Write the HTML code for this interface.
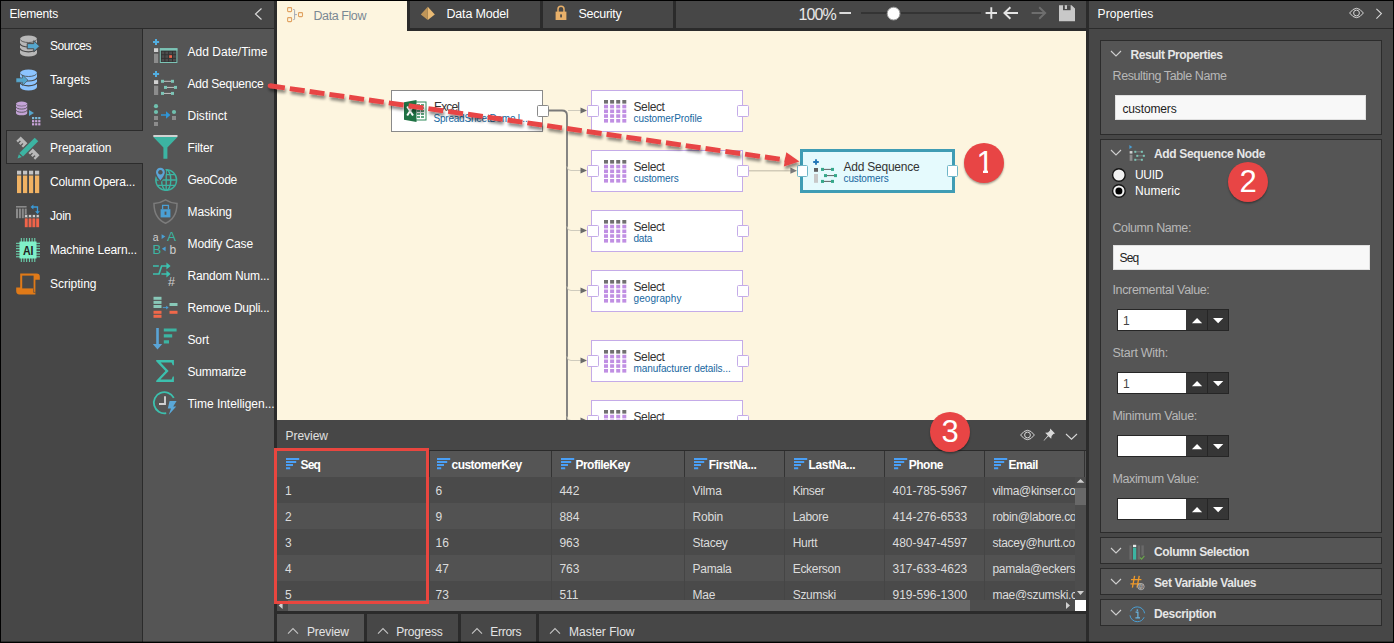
<!DOCTYPE html>
<html><head><meta charset="utf-8"><title>Data Flow</title>
<style>
html,body{margin:0;padding:0}
body{width:1394px;height:643px;position:relative;overflow:hidden;background:#2b2b2b;font-family:"Liberation Sans",sans-serif;font-size:12px;color:#fff}
body div,body span.t,body svg{position:absolute}
.t{white-space:nowrap;display:block}
</style></head><body>
<div style="left:1px;top:1px;width:273px;height:27px;background:#474747;"></div>
<div style="left:1px;top:29px;width:141px;height:613px;background:#474747;"></div>
<div style="left:143px;top:29px;width:131px;height:613px;background:#555555;"></div>
<div style="left:6px;top:130px;width:137px;height:34px;background:#555555;border:1px solid #2c2c2c;border-right:none;border-bottom-width:1.5px;box-sizing:border-box;"></div>
<span class="t " id="t1" style="left:9.5px;top:6px;font-size:12px;line-height:16px;letter-spacing:-0.19px;">Elements</span>
<svg style="left:252px;top:7px" width="12" height="14" viewBox="0 0 12 14"><path d="M9.5 1.5 L3.5 7 L9.5 12.5" fill="none" stroke="#d8d8d8" stroke-width="1.2"/></svg>
<span class="t " id="t2" style="left:50px;top:38px;font-size:12px;line-height:16px;letter-spacing:-0.43px;">Sources</span>
<span class="t " id="t3" style="left:50px;top:72px;font-size:12px;line-height:16px;letter-spacing:0.09px;">Targets</span>
<span class="t " id="t4" style="left:50px;top:106px;font-size:12px;line-height:16px;letter-spacing:-0.23px;">Select</span>
<span class="t " id="t5" style="left:50px;top:140px;font-size:12px;line-height:16px;letter-spacing:-0.05px;">Preparation</span>
<span class="t " id="t6" style="left:50px;top:174px;font-size:12px;line-height:16px;letter-spacing:-0.2px;">Column Opera...</span>
<span class="t " id="t7" style="left:50px;top:208px;font-size:12px;line-height:16px;letter-spacing:-0.25px;">Join</span>
<span class="t " id="t8" style="left:50px;top:242px;font-size:12px;line-height:16px;letter-spacing:-0.15px;">Machine Learn...</span>
<span class="t " id="t9" style="left:50px;top:276px;font-size:12px;line-height:16px;letter-spacing:-0.02px;">Scripting</span>
<span class="t " id="t10" style="left:187.5px;top:43.5px;font-size:12px;line-height:16px;letter-spacing:0.03px;">Add Date/Time</span>
<span class="t " id="t11" style="left:187.5px;top:75.5px;font-size:12px;line-height:16px;letter-spacing:-0.23px;">Add Sequence</span>
<span class="t " id="t12" style="left:187.5px;top:107.5px;font-size:12px;line-height:16px;letter-spacing:0.02px;">Distinct</span>
<span class="t " id="t13" style="left:187.5px;top:139.5px;font-size:12px;line-height:16px;letter-spacing:-0.11px;">Filter</span>
<span class="t " id="t14" style="left:187.5px;top:171.5px;font-size:12px;line-height:16px;letter-spacing:-0.27px;">GeoCode</span>
<span class="t " id="t15" style="left:187.5px;top:203.5px;font-size:12px;line-height:16px;letter-spacing:-0.03px;">Masking</span>
<span class="t " id="t16" style="left:187.5px;top:235.5px;font-size:12px;line-height:16px;letter-spacing:-0.11px;">Modify Case</span>
<span class="t " id="t17" style="left:187.5px;top:267.5px;font-size:12px;line-height:16px;letter-spacing:-0.16px;">Random Num...</span>
<span class="t " id="t18" style="left:187.5px;top:299.5px;font-size:12px;line-height:16px;letter-spacing:-0.23px;">Remove Dupli...</span>
<span class="t " id="t19" style="left:187.5px;top:331.5px;font-size:12px;line-height:16px;letter-spacing:-0.13px;">Sort</span>
<span class="t " id="t20" style="left:187.5px;top:363.5px;font-size:12px;line-height:16px;letter-spacing:-0.24px;">Summarize</span>
<span class="t " id="t21" style="left:187.5px;top:395.5px;font-size:12px;line-height:16px;letter-spacing:-0.03px;">Time Intelligen...</span>
<div style="left:277px;top:1px;width:130px;height:30px;background:#fdf5df;"></div>
<div style="left:410px;top:1px;width:130px;height:27px;background:#474747;"></div>
<div style="left:543px;top:1px;width:130px;height:27px;background:#474747;"></div>
<div style="left:676px;top:1px;width:410px;height:27px;background:#474747;"></div>
<span class="t " id="t22" style="left:313.5px;top:8.25px;font-size:12.5px;line-height:16.5px;color:#7a8894;letter-spacing:-0.42px;">Data Flow</span>
<span class="t " id="t23" style="left:446.5px;top:6.25px;font-size:12.5px;line-height:16.5px;letter-spacing:-0.19px;">Data Model</span>
<span class="t " id="t24" style="left:578.5px;top:6.25px;font-size:12.5px;line-height:16.5px;letter-spacing:-0.27px;">Security</span>
<span class="t " id="t25" style="left:798.5px;top:5.3px;font-size:16px;line-height:20px;color:#e8e8e8;letter-spacing:-0.86px;">100%</span>
<div style="left:277px;top:31px;width:809px;height:389px;background:#fdf5df;"></div>
<div style="left:277px;top:30px;width:809px;height:390px;overflow:hidden">
<svg style="left:0;top:0" width="810" height="390" viewBox="277 30 810 390"><path d="M548 110.5 H562 Q567 110.5 567 115.5 V430" fill="none" stroke="#7a7a7a" stroke-width="1.8"/><path d="M567 166.5 q0 4 4 4 H582" fill="none" stroke="#cfcbbd" stroke-width="1"/><path d="M580.5 167.5 l6.5 3 l-6.5 3z" fill="#6a6a6a"/><path d="M567 226.5 q0 4 4 4 H582" fill="none" stroke="#cfcbbd" stroke-width="1"/><path d="M580.5 227.5 l6.5 3 l-6.5 3z" fill="#6a6a6a"/><path d="M567 286.5 q0 4 4 4 H582" fill="none" stroke="#cfcbbd" stroke-width="1"/><path d="M580.5 287.5 l6.5 3 l-6.5 3z" fill="#6a6a6a"/><path d="M567 356.5 q0 4 4 4 H582" fill="none" stroke="#cfcbbd" stroke-width="1"/><path d="M580.5 357.5 l6.5 3 l-6.5 3z" fill="#6a6a6a"/><path d="M567 416.5 q0 4 4 4 H582" fill="none" stroke="#cfcbbd" stroke-width="1"/><path d="M580.5 417.5 l6.5 3 l-6.5 3z" fill="#6a6a6a"/><path d="M568 110.5 H582" stroke="#cfcbbd" stroke-width="1"/><path d="M580.5 107.5 l6.5 3 l-6.5 3z" fill="#6a6a6a"/><path d="M748 170.7 H792" stroke="#d2cbb8" stroke-width="1.6"/><path d="M790.4 167.6 l6.6 3.1 l-6.6 3.1z" fill="#7a7a7a"/></svg>
<div style="left:114px;top:60px;width:152px;height:41.5px;background:#ffffff;border:1px solid #8a8a8a;box-sizing:border-box;"></div>
<svg style="left:127px;top:70px" width="23" height="22" viewBox="0 0 23 22"><rect x="11" y="2" width="11" height="18" fill="#fff" stroke="#2e8a5a" stroke-width="1"/><path d="M13 5h7M13 8h7M13 11h7M13 14h7M13 17h7" stroke="#2e8a5a" stroke-width="1.6"/><path d="M16.5 4v14" stroke="#fff" stroke-width="1"/><path d="M0 2.2 L12.5 0 V22 L0 19.8z" fill="#1f7244"/><path d="M3.2 6.5 L9 15.5 M9 6.5 L3.2 15.5" stroke="#fff" stroke-width="2"/></svg>
<span class="t " id="t26" style="left:157px;top:69.2px;font-size:12px;line-height:16px;color:#333;letter-spacing:-0.87px;">Excel</span>
<span class="t " id="t27" style="left:156.5px;top:82.2px;font-size:10px;line-height:14px;color:#17679f;letter-spacing:-0.22px;">SpreadSheetDemo.l...</span>
<div style="left:260px;top:75px;width:11.5px;height:11.5px;background:#ffffff;border:1px solid #8a8a8a;box-sizing:border-box;border-radius:1.5px;"></div>
<div style="left:314px;top:60px;width:152px;height:41.5px;background:#ffffff;border:1px solid #c4abe8;box-sizing:border-box;"></div>
<svg style="left:327px;top:70.2px" width="23" height="23" viewBox="0 0 23 23"><rect x="0" y="0" width="4" height="3.6" fill="#707070"/><rect x="6.1" y="0" width="4" height="3.6" fill="#707070"/><rect x="12.2" y="0" width="4" height="3.6" fill="#707070"/><rect x="18.3" y="0" width="4" height="3.6" fill="#707070"/><rect x="0" y="4.75" width="4" height="3.6" fill="#c08fe3"/><rect x="6.1" y="4.75" width="4" height="3.6" fill="#c08fe3"/><rect x="12.2" y="4.75" width="4" height="3.6" fill="#c08fe3"/><rect x="18.3" y="4.75" width="4" height="3.6" fill="#c08fe3"/><rect x="0" y="9.5" width="4" height="3.6" fill="#c08fe3"/><rect x="6.1" y="9.5" width="4" height="3.6" fill="#c08fe3"/><rect x="12.2" y="9.5" width="4" height="3.6" fill="#c08fe3"/><rect x="18.3" y="9.5" width="4" height="3.6" fill="#c08fe3"/><rect x="0" y="14.25" width="4" height="3.6" fill="#c08fe3"/><rect x="6.1" y="14.25" width="4" height="3.6" fill="#c08fe3"/><rect x="12.2" y="14.25" width="4" height="3.6" fill="#c08fe3"/><rect x="18.3" y="14.25" width="4" height="3.6" fill="#c08fe3"/><rect x="0" y="19" width="4" height="3.6" fill="#c08fe3"/><rect x="6.1" y="19" width="4" height="3.6" fill="#c08fe3"/><rect x="12.2" y="19" width="4" height="3.6" fill="#c08fe3"/><rect x="18.3" y="19" width="4" height="3.6" fill="#c08fe3"/></svg>
<span class="t " id="t28" style="left:356.5px;top:69.2px;font-size:12px;line-height:16px;color:#333;letter-spacing:-0.39px;">Select</span>
<span class="t " id="t29" style="left:356.5px;top:82.2px;font-size:10px;line-height:14px;color:#17679f;letter-spacing:-0.06px;">customerProfile</span>
<div style="left:310px;top:75px;width:11.5px;height:11.5px;background:#ffffff;border:1px solid #c4abe8;box-sizing:border-box;border-radius:1.5px;"></div>
<div style="left:460px;top:75px;width:11.5px;height:11.5px;background:#ffffff;border:1px solid #c4abe8;box-sizing:border-box;border-radius:1.5px;"></div>
<div style="left:314px;top:120px;width:152px;height:41.5px;background:#ffffff;border:1px solid #c4abe8;box-sizing:border-box;"></div>
<svg style="left:327px;top:130.2px" width="23" height="23" viewBox="0 0 23 23"><rect x="0" y="0" width="4" height="3.6" fill="#707070"/><rect x="6.1" y="0" width="4" height="3.6" fill="#707070"/><rect x="12.2" y="0" width="4" height="3.6" fill="#707070"/><rect x="18.3" y="0" width="4" height="3.6" fill="#707070"/><rect x="0" y="4.75" width="4" height="3.6" fill="#c08fe3"/><rect x="6.1" y="4.75" width="4" height="3.6" fill="#c08fe3"/><rect x="12.2" y="4.75" width="4" height="3.6" fill="#c08fe3"/><rect x="18.3" y="4.75" width="4" height="3.6" fill="#c08fe3"/><rect x="0" y="9.5" width="4" height="3.6" fill="#c08fe3"/><rect x="6.1" y="9.5" width="4" height="3.6" fill="#c08fe3"/><rect x="12.2" y="9.5" width="4" height="3.6" fill="#c08fe3"/><rect x="18.3" y="9.5" width="4" height="3.6" fill="#c08fe3"/><rect x="0" y="14.25" width="4" height="3.6" fill="#c08fe3"/><rect x="6.1" y="14.25" width="4" height="3.6" fill="#c08fe3"/><rect x="12.2" y="14.25" width="4" height="3.6" fill="#c08fe3"/><rect x="18.3" y="14.25" width="4" height="3.6" fill="#c08fe3"/><rect x="0" y="19" width="4" height="3.6" fill="#c08fe3"/><rect x="6.1" y="19" width="4" height="3.6" fill="#c08fe3"/><rect x="12.2" y="19" width="4" height="3.6" fill="#c08fe3"/><rect x="18.3" y="19" width="4" height="3.6" fill="#c08fe3"/></svg>
<span class="t " id="t30" style="left:356.5px;top:129.2px;font-size:12px;line-height:16px;color:#333;letter-spacing:-0.39px;">Select</span>
<span class="t " id="t31" style="left:356.5px;top:142.2px;font-size:10px;line-height:14px;color:#17679f;letter-spacing:-0.12px;">customers</span>
<div style="left:310px;top:135px;width:11.5px;height:11.5px;background:#ffffff;border:1px solid #c4abe8;box-sizing:border-box;border-radius:1.5px;"></div>
<div style="left:460px;top:135px;width:11.5px;height:11.5px;background:#ffffff;border:1px solid #c4abe8;box-sizing:border-box;border-radius:1.5px;"></div>
<div style="left:314px;top:180px;width:152px;height:41.5px;background:#ffffff;border:1px solid #c4abe8;box-sizing:border-box;"></div>
<svg style="left:327px;top:190.2px" width="23" height="23" viewBox="0 0 23 23"><rect x="0" y="0" width="4" height="3.6" fill="#707070"/><rect x="6.1" y="0" width="4" height="3.6" fill="#707070"/><rect x="12.2" y="0" width="4" height="3.6" fill="#707070"/><rect x="18.3" y="0" width="4" height="3.6" fill="#707070"/><rect x="0" y="4.75" width="4" height="3.6" fill="#c08fe3"/><rect x="6.1" y="4.75" width="4" height="3.6" fill="#c08fe3"/><rect x="12.2" y="4.75" width="4" height="3.6" fill="#c08fe3"/><rect x="18.3" y="4.75" width="4" height="3.6" fill="#c08fe3"/><rect x="0" y="9.5" width="4" height="3.6" fill="#c08fe3"/><rect x="6.1" y="9.5" width="4" height="3.6" fill="#c08fe3"/><rect x="12.2" y="9.5" width="4" height="3.6" fill="#c08fe3"/><rect x="18.3" y="9.5" width="4" height="3.6" fill="#c08fe3"/><rect x="0" y="14.25" width="4" height="3.6" fill="#c08fe3"/><rect x="6.1" y="14.25" width="4" height="3.6" fill="#c08fe3"/><rect x="12.2" y="14.25" width="4" height="3.6" fill="#c08fe3"/><rect x="18.3" y="14.25" width="4" height="3.6" fill="#c08fe3"/><rect x="0" y="19" width="4" height="3.6" fill="#c08fe3"/><rect x="6.1" y="19" width="4" height="3.6" fill="#c08fe3"/><rect x="12.2" y="19" width="4" height="3.6" fill="#c08fe3"/><rect x="18.3" y="19" width="4" height="3.6" fill="#c08fe3"/></svg>
<span class="t " id="t32" style="left:356.5px;top:189.2px;font-size:12px;line-height:16px;color:#333;letter-spacing:-0.39px;">Select</span>
<span class="t " id="t33" style="left:356.5px;top:202.2px;font-size:10px;line-height:14px;color:#17679f;letter-spacing:-0.24px;">data</span>
<div style="left:310px;top:195px;width:11.5px;height:11.5px;background:#ffffff;border:1px solid #c4abe8;box-sizing:border-box;border-radius:1.5px;"></div>
<div style="left:460px;top:195px;width:11.5px;height:11.5px;background:#ffffff;border:1px solid #c4abe8;box-sizing:border-box;border-radius:1.5px;"></div>
<div style="left:314px;top:240px;width:152px;height:41.5px;background:#ffffff;border:1px solid #c4abe8;box-sizing:border-box;"></div>
<svg style="left:327px;top:250.2px" width="23" height="23" viewBox="0 0 23 23"><rect x="0" y="0" width="4" height="3.6" fill="#707070"/><rect x="6.1" y="0" width="4" height="3.6" fill="#707070"/><rect x="12.2" y="0" width="4" height="3.6" fill="#707070"/><rect x="18.3" y="0" width="4" height="3.6" fill="#707070"/><rect x="0" y="4.75" width="4" height="3.6" fill="#c08fe3"/><rect x="6.1" y="4.75" width="4" height="3.6" fill="#c08fe3"/><rect x="12.2" y="4.75" width="4" height="3.6" fill="#c08fe3"/><rect x="18.3" y="4.75" width="4" height="3.6" fill="#c08fe3"/><rect x="0" y="9.5" width="4" height="3.6" fill="#c08fe3"/><rect x="6.1" y="9.5" width="4" height="3.6" fill="#c08fe3"/><rect x="12.2" y="9.5" width="4" height="3.6" fill="#c08fe3"/><rect x="18.3" y="9.5" width="4" height="3.6" fill="#c08fe3"/><rect x="0" y="14.25" width="4" height="3.6" fill="#c08fe3"/><rect x="6.1" y="14.25" width="4" height="3.6" fill="#c08fe3"/><rect x="12.2" y="14.25" width="4" height="3.6" fill="#c08fe3"/><rect x="18.3" y="14.25" width="4" height="3.6" fill="#c08fe3"/><rect x="0" y="19" width="4" height="3.6" fill="#c08fe3"/><rect x="6.1" y="19" width="4" height="3.6" fill="#c08fe3"/><rect x="12.2" y="19" width="4" height="3.6" fill="#c08fe3"/><rect x="18.3" y="19" width="4" height="3.6" fill="#c08fe3"/></svg>
<span class="t " id="t34" style="left:356.5px;top:249.2px;font-size:12px;line-height:16px;color:#333;letter-spacing:-0.39px;">Select</span>
<span class="t " id="t35" style="left:356.5px;top:262.2px;font-size:10px;line-height:14px;color:#17679f;letter-spacing:0.08px;">geography</span>
<div style="left:310px;top:255px;width:11.5px;height:11.5px;background:#ffffff;border:1px solid #c4abe8;box-sizing:border-box;border-radius:1.5px;"></div>
<div style="left:460px;top:255px;width:11.5px;height:11.5px;background:#ffffff;border:1px solid #c4abe8;box-sizing:border-box;border-radius:1.5px;"></div>
<div style="left:314px;top:310px;width:152px;height:41.5px;background:#ffffff;border:1px solid #c4abe8;box-sizing:border-box;"></div>
<svg style="left:327px;top:320.2px" width="23" height="23" viewBox="0 0 23 23"><rect x="0" y="0" width="4" height="3.6" fill="#707070"/><rect x="6.1" y="0" width="4" height="3.6" fill="#707070"/><rect x="12.2" y="0" width="4" height="3.6" fill="#707070"/><rect x="18.3" y="0" width="4" height="3.6" fill="#707070"/><rect x="0" y="4.75" width="4" height="3.6" fill="#c08fe3"/><rect x="6.1" y="4.75" width="4" height="3.6" fill="#c08fe3"/><rect x="12.2" y="4.75" width="4" height="3.6" fill="#c08fe3"/><rect x="18.3" y="4.75" width="4" height="3.6" fill="#c08fe3"/><rect x="0" y="9.5" width="4" height="3.6" fill="#c08fe3"/><rect x="6.1" y="9.5" width="4" height="3.6" fill="#c08fe3"/><rect x="12.2" y="9.5" width="4" height="3.6" fill="#c08fe3"/><rect x="18.3" y="9.5" width="4" height="3.6" fill="#c08fe3"/><rect x="0" y="14.25" width="4" height="3.6" fill="#c08fe3"/><rect x="6.1" y="14.25" width="4" height="3.6" fill="#c08fe3"/><rect x="12.2" y="14.25" width="4" height="3.6" fill="#c08fe3"/><rect x="18.3" y="14.25" width="4" height="3.6" fill="#c08fe3"/><rect x="0" y="19" width="4" height="3.6" fill="#c08fe3"/><rect x="6.1" y="19" width="4" height="3.6" fill="#c08fe3"/><rect x="12.2" y="19" width="4" height="3.6" fill="#c08fe3"/><rect x="18.3" y="19" width="4" height="3.6" fill="#c08fe3"/></svg>
<span class="t " id="t36" style="left:356.5px;top:319.2px;font-size:12px;line-height:16px;color:#333;letter-spacing:-0.39px;">Select</span>
<span class="t " id="t37" style="left:356.5px;top:332.2px;font-size:10px;line-height:14px;color:#17679f;letter-spacing:-0.08px;">manufacturer details...</span>
<div style="left:310px;top:325px;width:11.5px;height:11.5px;background:#ffffff;border:1px solid #c4abe8;box-sizing:border-box;border-radius:1.5px;"></div>
<div style="left:460px;top:325px;width:11.5px;height:11.5px;background:#ffffff;border:1px solid #c4abe8;box-sizing:border-box;border-radius:1.5px;"></div>
<div style="left:314px;top:370px;width:152px;height:41.5px;background:#ffffff;border:1px solid #c4abe8;box-sizing:border-box;"></div>
<svg style="left:327px;top:380.2px" width="23" height="23" viewBox="0 0 23 23"><rect x="0" y="0" width="4" height="3.6" fill="#707070"/><rect x="6.1" y="0" width="4" height="3.6" fill="#707070"/><rect x="12.2" y="0" width="4" height="3.6" fill="#707070"/><rect x="18.3" y="0" width="4" height="3.6" fill="#707070"/><rect x="0" y="4.75" width="4" height="3.6" fill="#c08fe3"/><rect x="6.1" y="4.75" width="4" height="3.6" fill="#c08fe3"/><rect x="12.2" y="4.75" width="4" height="3.6" fill="#c08fe3"/><rect x="18.3" y="4.75" width="4" height="3.6" fill="#c08fe3"/><rect x="0" y="9.5" width="4" height="3.6" fill="#c08fe3"/><rect x="6.1" y="9.5" width="4" height="3.6" fill="#c08fe3"/><rect x="12.2" y="9.5" width="4" height="3.6" fill="#c08fe3"/><rect x="18.3" y="9.5" width="4" height="3.6" fill="#c08fe3"/><rect x="0" y="14.25" width="4" height="3.6" fill="#c08fe3"/><rect x="6.1" y="14.25" width="4" height="3.6" fill="#c08fe3"/><rect x="12.2" y="14.25" width="4" height="3.6" fill="#c08fe3"/><rect x="18.3" y="14.25" width="4" height="3.6" fill="#c08fe3"/><rect x="0" y="19" width="4" height="3.6" fill="#c08fe3"/><rect x="6.1" y="19" width="4" height="3.6" fill="#c08fe3"/><rect x="12.2" y="19" width="4" height="3.6" fill="#c08fe3"/><rect x="18.3" y="19" width="4" height="3.6" fill="#c08fe3"/></svg>
<span class="t " id="t38" style="left:356.5px;top:379.2px;font-size:12px;line-height:16px;color:#333;letter-spacing:-0.39px;">Select</span>
<span class="t " id="t39" style="left:356.5px;top:392.2px;font-size:10px;line-height:14px;color:#17679f;letter-spacing:0.21px;">products</span>
<div style="left:310px;top:385px;width:11.5px;height:11.5px;background:#ffffff;border:1px solid #c4abe8;box-sizing:border-box;border-radius:1.5px;"></div>
<div style="left:460px;top:385px;width:11.5px;height:11.5px;background:#ffffff;border:1px solid #c4abe8;box-sizing:border-box;border-radius:1.5px;"></div>
<div style="left:523px;top:119px;width:154.5px;height:44px;background:#e5fafd;border:3px solid #3f9cb4;box-sizing:border-box;"></div>
<svg style="left:536px;top:129px" width="25" height="25" viewBox="0 0 25 25"><path d="M3 0.2v5.6M0.2 3h5.6" stroke="#2478b8" stroke-width="1.9"/><rect x="1" y="9" width="4" height="3.8" fill="#606060"/><rect x="1" y="15" width="4" height="8.8" fill="#c8c8c8"/><path d="M9 10.4h11M12 16.6h11M9 22.4h11" stroke="#505050" stroke-width="0.9"/><rect x="8" y="8.9" width="3" height="3" fill="#35a88a"/><rect x="18" y="8.9" width="3" height="3" fill="#35a88a"/><rect x="11" y="15.1" width="3" height="3" fill="#35a88a"/><rect x="21" y="15.1" width="3" height="3" fill="#35a88a"/><rect x="8" y="20.9" width="3" height="3" fill="#35a88a"/><rect x="18" y="20.9" width="3" height="3" fill="#35a88a"/></svg>
<span class="t " id="t40" style="left:566.5px;top:128.9px;font-size:12px;line-height:16px;color:#333;letter-spacing:-0.23px;">Add Sequence</span>
<span class="t " id="t41" style="left:566.5px;top:142px;font-size:10px;line-height:14px;color:#17679f;letter-spacing:-0.12px;">customers</span>
<div style="left:519.6px;top:135px;width:11.5px;height:11.5px;background:#ffffff;border:1px solid #6fb6c8;box-sizing:border-box;border-radius:1.5px;"></div>
<div style="left:669.8px;top:135px;width:11.5px;height:11.5px;background:#ffffff;border:1px solid #6fb6c8;box-sizing:border-box;border-radius:1.5px;"></div>
</div>
<div style="left:277px;top:420px;width:809px;height:30px;background:#474747;"></div>
<span class="t " id="t42" style="left:285.5px;top:427.5px;font-size:12px;line-height:16px;color:#e0e0e0;letter-spacing:-0.03px;">Preview</span>
<div style="left:277px;top:451px;width:809px;height:26px;background:#555555;"></div>
<div style="left:277px;top:477px;width:798px;height:26px;background:#4a4a4a;"></div>
<div style="left:277px;top:503px;width:798px;height:26px;background:#525252;"></div>
<div style="left:277px;top:529px;width:798px;height:26px;background:#4a4a4a;"></div>
<div style="left:277px;top:555px;width:798px;height:26px;background:#525252;"></div>
<div style="left:277px;top:581px;width:798px;height:19px;background:#4a4a4a;"></div>
<div style="left:429px;top:451px;width:1px;height:26px;background:#333333;"></div>
<div style="left:429px;top:477px;width:1px;height:123px;background:#454545;"></div>
<div style="left:551px;top:451px;width:1px;height:26px;background:#333333;"></div>
<div style="left:551px;top:477px;width:1px;height:123px;background:#454545;"></div>
<div style="left:684px;top:451px;width:1px;height:26px;background:#333333;"></div>
<div style="left:684px;top:477px;width:1px;height:123px;background:#454545;"></div>
<div style="left:784px;top:451px;width:1px;height:26px;background:#333333;"></div>
<div style="left:784px;top:477px;width:1px;height:123px;background:#454545;"></div>
<div style="left:884px;top:451px;width:1px;height:26px;background:#333333;"></div>
<div style="left:884px;top:477px;width:1px;height:123px;background:#454545;"></div>
<div style="left:984px;top:451px;width:1px;height:26px;background:#333333;"></div>
<div style="left:984px;top:477px;width:1px;height:123px;background:#454545;"></div>
<div style="left:1084px;top:451px;width:1px;height:26px;background:#333333;"></div>
<div style="left:277px;top:450px;width:798px;height:150px;overflow:hidden">
<svg style="left:8.8px;top:8px" width="14" height="12" viewBox="0 0 14 12"><path d="M0 0h13.2v2H0zM0 3.05h10.2v2H0zM0 6.1h7v2H0zM0 9.2h4.2v2H0z" fill="#4a9ff5"/></svg>
<span class="t " id="t43" style="left:23.4px;top:6.5px;font-size:12px;line-height:16px;font-weight:bold;letter-spacing:-0.74px;">Seq</span>
<svg style="left:159.9px;top:8px" width="14" height="12" viewBox="0 0 14 12"><path d="M0 0h13.2v2H0zM0 3.05h10.2v2H0zM0 6.1h7v2H0zM0 9.2h4.2v2H0z" fill="#4a9ff5"/></svg>
<span class="t " id="t44" style="left:174.6px;top:6.5px;font-size:12px;line-height:16px;font-weight:bold;letter-spacing:-0.55px;">customerKey</span>
<svg style="left:283.5px;top:8px" width="14" height="12" viewBox="0 0 14 12"><path d="M0 0h13.2v2H0zM0 3.05h10.2v2H0zM0 6.1h7v2H0zM0 9.2h4.2v2H0z" fill="#4a9ff5"/></svg>
<span class="t " id="t45" style="left:298.4px;top:6.5px;font-size:12px;line-height:16px;font-weight:bold;letter-spacing:-0.5px;">ProfileKey</span>
<svg style="left:416.9px;top:8px" width="14" height="12" viewBox="0 0 14 12"><path d="M0 0h13.2v2H0zM0 3.05h10.2v2H0zM0 6.1h7v2H0zM0 9.2h4.2v2H0z" fill="#4a9ff5"/></svg>
<span class="t " id="t46" style="left:431.7px;top:6.5px;font-size:12px;line-height:16px;font-weight:bold;letter-spacing:-0.36px;">FirstNa...</span>
<svg style="left:517px;top:8px" width="14" height="12" viewBox="0 0 14 12"><path d="M0 0h13.2v2H0zM0 3.05h10.2v2H0zM0 6.1h7v2H0zM0 9.2h4.2v2H0z" fill="#4a9ff5"/></svg>
<span class="t " id="t47" style="left:531.6px;top:6.5px;font-size:12px;line-height:16px;font-weight:bold;letter-spacing:-0.38px;">LastNa...</span>
<svg style="left:617px;top:8px" width="14" height="12" viewBox="0 0 14 12"><path d="M0 0h13.2v2H0zM0 3.05h10.2v2H0zM0 6.1h7v2H0zM0 9.2h4.2v2H0z" fill="#4a9ff5"/></svg>
<span class="t " id="t48" style="left:631.8px;top:6.5px;font-size:12px;line-height:16px;font-weight:bold;letter-spacing:-0.51px;">Phone</span>
<svg style="left:717px;top:8px" width="14" height="12" viewBox="0 0 14 12"><path d="M0 0h13.2v2H0zM0 3.05h10.2v2H0zM0 6.1h7v2H0zM0 9.2h4.2v2H0z" fill="#4a9ff5"/></svg>
<span class="t " id="t49" style="left:731.6px;top:6.5px;font-size:12px;line-height:16px;font-weight:bold;letter-spacing:-0.58px;">Email</span>
<span class="t " id="t50" style="left:8px;top:32.6px;font-size:12px;line-height:16px;color:#dcdcdc;">1</span>
<span class="t " id="t51" style="left:158.5px;top:32.6px;font-size:12px;line-height:16px;color:#dcdcdc;">6</span>
<span class="t " id="t52" style="left:282.4px;top:32.6px;font-size:12px;line-height:16px;color:#dcdcdc;">442</span>
<span class="t " id="t53" style="left:415.6px;top:32.6px;font-size:12px;line-height:16px;color:#dcdcdc;letter-spacing:-0.12px;">Vilma</span>
<span class="t " id="t54" style="left:515.7px;top:32.6px;font-size:12px;line-height:16px;color:#dcdcdc;letter-spacing:-0.39px;">Kinser</span>
<span class="t " id="t55" style="left:615.5px;top:32.6px;font-size:12px;line-height:16px;color:#dcdcdc;">401-785-5967</span>
<span class="t " id="t56" style="left:715.5px;top:32.6px;font-size:12px;line-height:16px;color:#dcdcdc;letter-spacing:-0.3px;">vilma@kinser.com</span>
<span class="t " id="t57" style="left:8px;top:58.6px;font-size:12px;line-height:16px;color:#dcdcdc;">2</span>
<span class="t " id="t58" style="left:158.5px;top:58.6px;font-size:12px;line-height:16px;color:#dcdcdc;">9</span>
<span class="t " id="t59" style="left:282.4px;top:58.6px;font-size:12px;line-height:16px;color:#dcdcdc;">884</span>
<span class="t " id="t60" style="left:415.6px;top:58.6px;font-size:12px;line-height:16px;color:#dcdcdc;letter-spacing:-0.21px;">Robin</span>
<span class="t " id="t61" style="left:515.7px;top:58.6px;font-size:12px;line-height:16px;color:#dcdcdc;letter-spacing:-0.28px;">Labore</span>
<span class="t " id="t62" style="left:615.5px;top:58.6px;font-size:12px;line-height:16px;color:#dcdcdc;">414-276-6533</span>
<span class="t " id="t63" style="left:715.5px;top:58.6px;font-size:12px;line-height:16px;color:#dcdcdc;letter-spacing:-0.3px;">robin@labore.com</span>
<span class="t " id="t64" style="left:8px;top:84.6px;font-size:12px;line-height:16px;color:#dcdcdc;">3</span>
<span class="t " id="t65" style="left:158.5px;top:84.6px;font-size:12px;line-height:16px;color:#dcdcdc;">16</span>
<span class="t " id="t66" style="left:282.4px;top:84.6px;font-size:12px;line-height:16px;color:#dcdcdc;">963</span>
<span class="t " id="t67" style="left:415.6px;top:84.6px;font-size:12px;line-height:16px;color:#dcdcdc;letter-spacing:-0.3px;">Stacey</span>
<span class="t " id="t68" style="left:515.7px;top:84.6px;font-size:12px;line-height:16px;color:#dcdcdc;letter-spacing:-0.3px;">Hurtt</span>
<span class="t " id="t69" style="left:615.5px;top:84.6px;font-size:12px;line-height:16px;color:#dcdcdc;">480-947-4597</span>
<span class="t " id="t70" style="left:715.5px;top:84.6px;font-size:12px;line-height:16px;color:#dcdcdc;letter-spacing:-0.3px;">stacey@hurtt.com</span>
<span class="t " id="t71" style="left:8px;top:110.6px;font-size:12px;line-height:16px;color:#dcdcdc;">4</span>
<span class="t " id="t72" style="left:158.5px;top:110.6px;font-size:12px;line-height:16px;color:#dcdcdc;">47</span>
<span class="t " id="t73" style="left:282.4px;top:110.6px;font-size:12px;line-height:16px;color:#dcdcdc;">763</span>
<span class="t " id="t74" style="left:415.6px;top:110.6px;font-size:12px;line-height:16px;color:#dcdcdc;letter-spacing:-0.3px;">Pamala</span>
<span class="t " id="t75" style="left:515.7px;top:110.6px;font-size:12px;line-height:16px;color:#dcdcdc;letter-spacing:-0.3px;">Eckerson</span>
<span class="t " id="t76" style="left:615.5px;top:110.6px;font-size:12px;line-height:16px;color:#dcdcdc;">317-633-4623</span>
<span class="t " id="t77" style="left:715.5px;top:110.6px;font-size:12px;line-height:16px;color:#dcdcdc;letter-spacing:-0.3px;">pamala@eckerson.com</span>
<span class="t " id="t78" style="left:8px;top:136.6px;font-size:12px;line-height:16px;color:#dcdcdc;">5</span>
<span class="t " id="t79" style="left:158.5px;top:136.6px;font-size:12px;line-height:16px;color:#dcdcdc;">73</span>
<span class="t " id="t80" style="left:282.4px;top:136.6px;font-size:12px;line-height:16px;color:#dcdcdc;">511</span>
<span class="t " id="t81" style="left:415.6px;top:136.6px;font-size:12px;line-height:16px;color:#dcdcdc;letter-spacing:-0.3px;">Mae</span>
<span class="t " id="t82" style="left:515.7px;top:136.6px;font-size:12px;line-height:16px;color:#dcdcdc;letter-spacing:-0.3px;">Szumski</span>
<span class="t " id="t83" style="left:615.5px;top:136.6px;font-size:12px;line-height:16px;color:#dcdcdc;">919-596-1300</span>
<span class="t " id="t84" style="left:715.5px;top:136.6px;font-size:12px;line-height:16px;color:#dcdcdc;letter-spacing:-0.3px;">mae@szumski.com</span>
</div>
<div style="left:1075px;top:477px;width:11px;height:123px;background:#4d4d4d;"></div>
<div style="left:1075px;top:488px;width:11px;height:17px;background:#686868;"></div>
<svg style="left:1075px;top:477px" width="11" height="123" viewBox="0 0 11 123"><path d="M1.7 5.8 L5.55 2 L9.4 5.8z M2 114 L9 114 L5.5 118z" fill="#d0d0d0"/></svg>
<div style="left:277px;top:600px;width:798px;height:11px;background:#4d4d4d;"></div>
<div style="left:288px;top:600px;width:682px;height:11px;background:#666666;"></div>
<svg style="left:277px;top:600px" width="798" height="11" viewBox="0 0 798 11"><path d="M5.6 2 L5.6 9 L1.6 5.5z M789 2 L789 9 L793 5.5z" fill="#d0d0d0"/></svg>
<div style="left:1075px;top:600px;width:11px;height:11px;background:#ffffff;"></div>
<div style="left:277px;top:614px;width:809px;height:28px;background:#474747;"></div>
<div style="left:277px;top:614px;width:87px;height:28px;background:#555555;"></div>
<div style="left:364px;top:614px;width:3px;height:28px;background:#2b2b2b;"></div>
<div style="left:458px;top:614px;width:3px;height:28px;background:#2b2b2b;"></div>
<div style="left:536px;top:614px;width:3px;height:28px;background:#2b2b2b;"></div>
<svg style="left:287px;top:627.4px" width="12" height="8" viewBox="0 0 12 8"><path d="M1 6.6 L6 1.6 L11 6.6" fill="none" stroke="#c4c4c4" stroke-width="1.1"/></svg>
<span class="t " id="t85" style="left:306.9px;top:623.6px;font-size:12px;line-height:16px;color:#e4e4e4;letter-spacing:-0.1px;">Preview</span>
<svg style="left:377px;top:627.4px" width="12" height="8" viewBox="0 0 12 8"><path d="M1 6.6 L6 1.6 L11 6.6" fill="none" stroke="#c4c4c4" stroke-width="1.1"/></svg>
<span class="t " id="t86" style="left:396.2px;top:623.6px;font-size:12px;line-height:16px;color:#e4e4e4;letter-spacing:-0.2px;">Progress</span>
<svg style="left:471px;top:627.4px" width="12" height="8" viewBox="0 0 12 8"><path d="M1 6.6 L6 1.6 L11 6.6" fill="none" stroke="#c4c4c4" stroke-width="1.1"/></svg>
<span class="t " id="t87" style="left:490.2px;top:623.6px;font-size:12px;line-height:16px;color:#e4e4e4;letter-spacing:-0.25px;">Errors</span>
<svg style="left:549px;top:627.4px" width="12" height="8" viewBox="0 0 12 8"><path d="M1 6.6 L6 1.6 L11 6.6" fill="none" stroke="#c4c4c4" stroke-width="1.1"/></svg>
<span class="t " id="t88" style="left:569.1px;top:623.6px;font-size:12px;line-height:16px;color:#e4e4e4;letter-spacing:0.01px;">Master Flow</span>
<div style="left:1089px;top:1px;width:305px;height:27px;background:#474747;"></div>
<div style="left:1089px;top:29px;width:305px;height:613px;background:#474747;"></div>
<span class="t " id="t89" style="left:1097.5px;top:6px;font-size:12px;line-height:16px;letter-spacing:0.13px;">Properties</span>
<div style="left:1100px;top:40px;width:282px;height:95px;background:#555555;border:1px solid #2c2c2c;box-sizing:border-box;"></div>
<div style="left:1100px;top:139px;width:282px;height:394px;background:#555555;border:1px solid #2c2c2c;box-sizing:border-box;"></div>
<div style="left:1100px;top:537px;width:282px;height:27px;background:#555555;border:1px solid #2c2c2c;box-sizing:border-box;"></div>
<div style="left:1100px;top:568.4px;width:282px;height:27px;background:#555555;border:1px solid #2c2c2c;box-sizing:border-box;"></div>
<div style="left:1100px;top:599.4px;width:282px;height:27px;background:#555555;border:1px solid #2c2c2c;box-sizing:border-box;"></div>
<svg style="left:1109.5px;top:50.2px" width="12" height="8" viewBox="0 0 12 8"><path d="M1 1 L6 6 L11 1" fill="none" stroke="#d0d0d0" stroke-width="1.1"/></svg>
<svg style="left:1109.5px;top:149.2px" width="12" height="8" viewBox="0 0 12 8"><path d="M1 1 L6 6 L11 1" fill="none" stroke="#d0d0d0" stroke-width="1.1"/></svg>
<svg style="left:1109.5px;top:547.2px" width="12" height="8" viewBox="0 0 12 8"><path d="M1 1 L6 6 L11 1" fill="none" stroke="#d0d0d0" stroke-width="1.1"/></svg>
<svg style="left:1109.5px;top:578.2px" width="12" height="8" viewBox="0 0 12 8"><path d="M1 1 L6 6 L11 1" fill="none" stroke="#d0d0d0" stroke-width="1.1"/></svg>
<svg style="left:1109.5px;top:609.2px" width="12" height="8" viewBox="0 0 12 8"><path d="M1 1 L6 6 L11 1" fill="none" stroke="#d0d0d0" stroke-width="1.1"/></svg>
<span class="t " id="t90" style="left:1130.5px;top:46.5px;font-size:12px;line-height:16px;color:#e6e6e6;font-weight:bold;letter-spacing:-0.43px;">Result Properties</span>
<span class="t " id="t91" style="left:1112.5px;top:67.75px;font-size:12.5px;line-height:16.5px;color:#b8b8b8;letter-spacing:-0.4px;">Resulting Table Name</span>
<div style="left:1115px;top:95px;width:251px;height:25px;background:#f8f8f8;border:1px solid #e0e0e0;box-sizing:border-box;"></div>
<span class="t " id="t92" style="left:1122.5px;top:100.5px;font-size:12px;line-height:16px;color:#222;letter-spacing:-0.15px;">customers</span>
<span class="t " id="t93" style="left:1154px;top:145.5px;font-size:12px;line-height:16px;color:#e6e6e6;font-weight:bold;letter-spacing:-0.33px;">Add Sequence Node</span>
<svg style="left:1111px;top:166.8px" width="16" height="16" viewBox="0 0 16 16"><circle cx="7.9" cy="8" r="6.3" fill="#f2f2f2" stroke="#151515" stroke-width="1.4"/></svg>
<svg style="left:1111px;top:182.8px" width="16" height="16" viewBox="0 0 16 16"><circle cx="7.9" cy="8" r="6.3" fill="#f2f2f2" stroke="#151515" stroke-width="1.4"/><circle cx="7.9" cy="8" r="3.5" fill="#000"/></svg>
<span class="t " id="t94" style="left:1135px;top:167px;font-size:12px;line-height:16px;letter-spacing:-0.34px;">UUID</span>
<span class="t " id="t95" style="left:1135px;top:183px;font-size:12px;line-height:16px;letter-spacing:0.05px;">Numeric</span>
<span class="t " id="t96" style="left:1112.5px;top:219.75px;font-size:12.5px;line-height:16.5px;color:#b8b8b8;letter-spacing:-0.41px;">Column Name:</span>
<div style="left:1112.5px;top:244.5px;width:257px;height:25px;background:#f8f8f8;border:1px solid #e0e0e0;box-sizing:border-box;"></div>
<span class="t " id="t97" style="left:1119.5px;top:250px;font-size:12px;line-height:16px;color:#222;letter-spacing:-0.79px;">Seq</span>
<span class="t " id="t98" style="left:1112.5px;top:281.75px;font-size:12.5px;line-height:16.5px;color:#b8b8b8;letter-spacing:-0.35px;">Incremental Value:</span>
<div style="left:1117px;top:309px;width:112px;height:22px;background:#363636;border:1px solid #262626;box-sizing:border-box;"></div>
<div style="left:1118px;top:310px;width:68px;height:20px;background:#ffffff;"></div>
<div style="left:1207px;top:310px;width:1px;height:20px;background:#262626;"></div>
<svg style="left:1186px;top:309px" width="43" height="22" viewBox="0 0 43 22"><path d="M5.9 14.3 L11.05 9.1 L16.2 14.3z M27 8.9 L37.3 8.9 L32.15 14.2z" fill="#fff"/></svg>
<span class="t " id="t99" style="left:1123px;top:312.5px;font-size:12px;line-height:16px;color:#444;">1</span>
<span class="t " id="t100" style="left:1112.5px;top:344.75px;font-size:12.5px;line-height:16.5px;color:#b8b8b8;letter-spacing:-0.26px;">Start With:</span>
<div style="left:1117px;top:372px;width:112px;height:22px;background:#363636;border:1px solid #262626;box-sizing:border-box;"></div>
<div style="left:1118px;top:373px;width:68px;height:20px;background:#ffffff;"></div>
<div style="left:1207px;top:373px;width:1px;height:20px;background:#262626;"></div>
<svg style="left:1186px;top:372px" width="43" height="22" viewBox="0 0 43 22"><path d="M5.9 14.3 L11.05 9.1 L16.2 14.3z M27 8.9 L37.3 8.9 L32.15 14.2z" fill="#fff"/></svg>
<span class="t " id="t101" style="left:1123px;top:375.5px;font-size:12px;line-height:16px;color:#444;">1</span>
<span class="t " id="t102" style="left:1112.5px;top:407.75px;font-size:12.5px;line-height:16.5px;color:#b8b8b8;letter-spacing:-0.3px;">Minimum Value:</span>
<div style="left:1117px;top:435px;width:112px;height:22px;background:#363636;border:1px solid #262626;box-sizing:border-box;"></div>
<div style="left:1118px;top:436px;width:68px;height:20px;background:#ffffff;"></div>
<div style="left:1207px;top:436px;width:1px;height:20px;background:#262626;"></div>
<svg style="left:1186px;top:435px" width="43" height="22" viewBox="0 0 43 22"><path d="M5.9 14.3 L11.05 9.1 L16.2 14.3z M27 8.9 L37.3 8.9 L32.15 14.2z" fill="#fff"/></svg>
<span class="t " id="t103" style="left:1112.5px;top:470.75px;font-size:12.5px;line-height:16.5px;color:#b8b8b8;letter-spacing:-0.41px;">Maximum Value:</span>
<div style="left:1117px;top:498px;width:112px;height:22px;background:#363636;border:1px solid #262626;box-sizing:border-box;"></div>
<div style="left:1118px;top:499px;width:68px;height:20px;background:#ffffff;"></div>
<div style="left:1207px;top:499px;width:1px;height:20px;background:#262626;"></div>
<svg style="left:1186px;top:498px" width="43" height="22" viewBox="0 0 43 22"><path d="M5.9 14.3 L11.05 9.1 L16.2 14.3z M27 8.9 L37.3 8.9 L32.15 14.2z" fill="#fff"/></svg>
<span class="t " id="t104" style="left:1154px;top:543.5px;font-size:12px;line-height:16px;color:#e6e6e6;font-weight:bold;letter-spacing:-0.4px;">Column Selection</span>
<span class="t " id="t105" style="left:1154px;top:574.5px;font-size:12px;line-height:16px;color:#e6e6e6;font-weight:bold;letter-spacing:-0.39px;">Set Variable Values</span>
<span class="t " id="t106" style="left:1154px;top:605.5px;font-size:12px;line-height:16px;color:#e6e6e6;font-weight:bold;letter-spacing:-0.37px;">Description</span>
<svg style="left:16px;top:33px" width="26" height="26" viewBox="0 0 26 26"><g transform="translate(4,2.5)"><path d="M0 3.5 V17.5 A8.5 3.5 0 0 0 17 17.5 V3.5z" fill="#b8b8b8"/><ellipse cx="8.5" cy="3.5" rx="8.5" ry="3.5" fill="#b8b8b8"/><path d="M0 8 A8.5 3.5 0 0 0 17 8 M0 12.8 A8.5 3.5 0 0 0 17 12.8" fill="none" stroke="#474747" stroke-width="1.2"/><path d="M0.5 4 A8 3 0 0 0 16.5 4" fill="none" stroke="#474747" stroke-width="0.8"/></g><path d="M11.2 10.6 H17.8 V7.6 L23.6 13.2 L17.8 18.8 V15.8 H11.2z" fill="#56a6cc" stroke="#474747" stroke-width="1"/></svg>
<svg style="left:14px;top:67px" width="28" height="26" viewBox="0 0 28 26"><g transform="translate(6,2.5)"><path d="M0 3.5 V17.5 A8.5 3.5 0 0 0 17 17.5 V3.5z" fill="#8cc4ff"/><ellipse cx="8.5" cy="3.5" rx="8.5" ry="3.5" fill="#8cc4ff"/><path d="M0 8 A8.5 3.5 0 0 0 17 8 M0 12.8 A8.5 3.5 0 0 0 17 12.8" fill="none" stroke="#474747" stroke-width="1.2"/><path d="M0.5 4 A8 3 0 0 0 16.5 4" fill="none" stroke="#474747" stroke-width="0.8"/></g><path d="M2 11 H8.5 V8 L14 13.2 L8.5 18.4 V15.4 H2z" fill="#56a6cc" stroke="#474747" stroke-width="0.6"/></svg>
<svg style="left:14px;top:100px" width="28" height="28" viewBox="0 0 28 28"><g transform="translate(2,1.5) scale(0.66)"><path d="M0 3.5 V17.5 A8.5 3.5 0 0 0 17 17.5 V3.5z" fill="#c3a3d6"/><ellipse cx="8.5" cy="3.5" rx="8.5" ry="3.5" fill="#c3a3d6"/><path d="M0 8 A8.5 3.5 0 0 0 17 8 M0 12.8 A8.5 3.5 0 0 0 17 12.8" fill="none" stroke="#474747" stroke-width="1.2"/><path d="M0.5 4 A8 3 0 0 0 16.5 4" fill="none" stroke="#474747" stroke-width="0.8"/></g><path d="M15 10 L20 13 L15 16z" fill="#56a6cc"/><rect x="18" y="17" width="2.2" height="2.2" fill="#7ab8d8"/><rect x="21.1" y="17" width="2.2" height="2.2" fill="#7ab8d8"/><rect x="24.2" y="17" width="2.2" height="2.2" fill="#7ab8d8"/><rect x="18" y="20.1" width="2.2" height="2.2" fill="#c9a3da"/><rect x="21.1" y="20.1" width="2.2" height="2.2" fill="#c9a3da"/><rect x="24.2" y="20.1" width="2.2" height="2.2" fill="#c9a3da"/><rect x="18" y="23.2" width="2.2" height="2.2" fill="#c9a3da"/><rect x="21.1" y="23.2" width="2.2" height="2.2" fill="#c9a3da"/><rect x="24.2" y="23.2" width="2.2" height="2.2" fill="#c9a3da"/></svg>
<svg style="left:15px;top:135px" width="26" height="26" viewBox="0 0 26 26"><g transform="rotate(45 13 13)"><path d="M-0.3 10h9.5v3.4h-9.5z M16.8 10h9.5v3.4h-9.5z M-0.3 13.2h2.3v3h-2.3zM3.3 13.2h2.3v3h-2.3zM6.9 13.2h2.3v3h-2.3zM16.8 13.2h2.3v3h-2.3zM20.4 13.2h2.3v3h-2.3zM24 13.2h2.3v3h-2.3z" fill="#b8b8b8"/></g><g transform="rotate(-45 13 13)"><path d="M3.4 10.5h21.6v5H3.4z" fill="#3cb4a2"/><path d="M2.2 10.9 L-1.8 13 L2.2 15.1z" fill="#3cb4a2"/></g></svg>
<svg style="left:17px;top:170px" width="23" height="24" viewBox="0 0 23 24"><rect x="0" y="0.7" width="4.2" height="3.8" fill="#c4c4c4"/><rect x="0" y="5.5" width="4.2" height="17.6" fill="#f0b263"/><rect x="6" y="0.7" width="4.2" height="3.8" fill="#c4c4c4"/><rect x="6" y="5.5" width="4.2" height="17.6" fill="#f0b263"/><rect x="12" y="0.7" width="4.2" height="3.8" fill="#c4c4c4"/><rect x="12" y="5.5" width="4.2" height="17.6" fill="#f0b263"/><rect x="18" y="0.7" width="4.2" height="3.8" fill="#c4c4c4"/><rect x="18" y="5.5" width="4.2" height="17.6" fill="#f0b263"/></svg>
<svg style="left:15px;top:204px" width="26" height="25" viewBox="0 0 26 25"><path d="M1 2h10.6v1.6H1z" fill="#8a8a8a"/><rect x="1" y="4.6" width="2" height="9.6" fill="#8a8a8a"/><rect x="3.9" y="4.6" width="2" height="9.6" fill="#8a8a8a"/><rect x="6.8" y="4.6" width="2" height="9.6" fill="#8a8a8a"/><rect x="9.7" y="4.6" width="2" height="9.6" fill="#8a8a8a"/><rect x="9.8" y="10.8" width="2.9" height="2.8" fill="#d0d0d0" stroke="#474747" stroke-width="0.5"/><rect x="9.8" y="14.4" width="2.9" height="8.8" fill="#f0644a"/><rect x="13.6" y="10.8" width="2.9" height="2.8" fill="#d0d0d0" stroke="#474747" stroke-width="0.5"/><rect x="13.6" y="14.4" width="2.9" height="8.8" fill="#f0644a"/><rect x="17.4" y="10.8" width="2.9" height="2.8" fill="#d0d0d0" stroke="#474747" stroke-width="0.5"/><rect x="17.4" y="14.4" width="2.9" height="8.8" fill="#f0644a"/><rect x="21.2" y="10.8" width="2.9" height="2.8" fill="#d0d0d0" stroke="#474747" stroke-width="0.5"/><rect x="21.2" y="14.4" width="2.9" height="8.8" fill="#f0644a"/><path d="M17.5 3 H22.5 V8" fill="none" stroke="#3a9ad8" stroke-width="1.3"/><path d="M18.4 0.6 L15.6 3 L18.4 5.4z M20.1 7.2 L22.5 10 L24.9 7.2z" fill="#3a9ad8"/></svg>
<svg style="left:16px;top:238px" width="24" height="24" viewBox="0 0 24 24"><path d="M5.3 0v24M8 0v24M10.7 0v24M13.4 0v24M16.1 0v24M18.8 0v24M0 5.3h24M0 8h24M0 10.7h24M0 13.4h24M0 16.1h24M0 18.8h24" stroke="#6fe0b8" stroke-width="1"/><rect x="3.5" y="3.5" width="17" height="17" fill="#80f0c8"/><text x="12.2" y="16.7" font-family="Liberation Sans, sans-serif" font-size="12.8" font-weight="bold" text-anchor="middle" fill="#222" textLength="10.6" lengthAdjust="spacingAndGlyphs">AI</text></svg>
<svg style="left:16px;top:273px" width="24" height="22" viewBox="0 0 24 22"><path d="M4.2 0.4 H20.5 Q23.8 0.4 23.8 3.6 V6.8 H19.4 V21.4 H3.4 Q0.2 21.4 0.2 18 V14.4 H4.2z" fill="#e07a18"/><path d="M6.2 2.6 H17.6 V15.4 H6.2z" fill="#474747"/><path d="M17.6 15.4 V19.4 H19.4" stroke="#474747" stroke-width="0.6" fill="none"/></svg>
<svg style="left:153px;top:39px" width="25" height="25" viewBox="0 0 25 25"><path d="M3 -0.1v6.2M-0.1 3h6.2" stroke="#52aee0" stroke-width="2"/><rect x="1" y="9.2" width="4.2" height="3.8" fill="#d2d2d2"/><rect x="1" y="14.7" width="4.2" height="9.3" fill="#8c8c8c"/><rect x="7.3" y="9.7" width="16.6" height="13.8" fill="#303030" stroke="#7cc4b6" stroke-width="1"/><rect x="6.8" y="9.2" width="17.6" height="2.4" fill="#7cc4b6"/><rect x="8.6" y="12.6" width="2.8" height="2.7" fill="#4c4c4c"/><rect x="12.4" y="12.6" width="2.8" height="2.7" fill="#4c4c4c"/><rect x="16.2" y="12.6" width="2.8" height="2.7" fill="#4c4c4c"/><rect x="20" y="12.6" width="2.8" height="2.7" fill="#4c4c4c"/><rect x="8.6" y="16.2" width="2.8" height="2.7" fill="#4c4c4c"/><rect x="12.4" y="16.2" width="2.8" height="2.7" fill="#4c4c4c"/><rect x="16.2" y="16.2" width="2.8" height="2.7" fill="#f0644a"/><rect x="20" y="16.2" width="2.8" height="2.7" fill="#4c4c4c"/><rect x="8.6" y="19.8" width="2.8" height="2.7" fill="#4c4c4c"/><rect x="12.4" y="19.8" width="2.8" height="2.7" fill="#4c4c4c"/><rect x="16.2" y="19.8" width="2.8" height="2.7" fill="#4c4c4c"/><rect x="20" y="19.8" width="2.8" height="2.7" fill="#4c4c4c"/></svg>
<svg style="left:153px;top:71px" width="25" height="25" viewBox="0 0 25 25"><path d="M3 -0.1v6.2M-0.1 3h6.2" stroke="#52aee0" stroke-width="2"/><rect x="1" y="9.2" width="4.2" height="3.8" fill="#d2d2d2"/><rect x="1" y="14.7" width="4.2" height="9.3" fill="#8c8c8c"/><path d="M9 10.3h11M12 16.4h11M9 22.4h11" stroke="#cfcfcf" stroke-width="0.9"/><rect x="8" y="8.8" width="3" height="3" fill="#7cc4b6"/><rect x="18" y="8.8" width="3" height="3" fill="#7cc4b6"/><rect x="11" y="14.9" width="3" height="3" fill="#7cc4b6"/><rect x="21" y="14.9" width="3" height="3" fill="#7cc4b6"/><rect x="8" y="20.9" width="3" height="3" fill="#7cc4b6"/><rect x="18" y="20.9" width="3" height="3" fill="#7cc4b6"/></svg>
<svg style="left:153px;top:103px" width="25" height="25" viewBox="0 0 25 25"><circle cx="3" cy="3.2" r="2.1" fill="#6fc0ae"/><circle cx="3" cy="9" r="2.1" fill="#6fc0ae"/><rect x="1" y="13" width="4" height="4" fill="#8c8c8c"/><rect x="1" y="19" width="4" height="4" fill="#8c8c8c"/><path d="M8 11.2h5v-3l4.4 3.8-4.4 3.8v-3H8z" fill="#2f95d6"/><circle cx="21" cy="9" r="2.1" fill="#6fc0ae"/><rect x="19" y="13" width="4" height="4" fill="#8c8c8c"/></svg>
<svg style="left:152.5px;top:135px" width="25" height="24" viewBox="0 0 25 24"><path d="M0.3 0h24.2v2H0.3z" fill="#d2d2d2"/><path d="M0.3 2 H24.5 L14.4 12.4 V23.8 H10.4 V12.4z" fill="#3cb4a2"/></svg>
<svg style="left:153px;top:167px" width="25" height="25" viewBox="0 0 25 25"><g fill="none" stroke="#3cb4a2" stroke-width="1.4"><circle cx="13.2" cy="13" r="10.4"/><ellipse cx="13.2" cy="13" rx="4.6" ry="10.4"/><path d="M2.8 13h20.8M13.2 2.6v20.8M4.6 7.6h17.2M4.6 18.4h17.2"/></g><path d="M7.4 0.6 a4.6 4.6 0 0 1 4.6 4.6 c0 3.2 -4.6 8.4 -4.6 8.4 s-4.6 -5.2 -4.6 -8.4 a4.6 4.6 0 0 1 4.6 -4.6z" fill="#555" stroke="#555" stroke-width="2.4"/><path d="M7.4 0.8 a4.4 4.4 0 0 1 4.4 4.4 c0 3.1 -4.4 8.2 -4.4 8.2 s-4.4 -5.1 -4.4 -8.2 a4.4 4.4 0 0 1 4.4 -4.4z M7.4 3 a2.3 2.3 0 1 0 0.01 0z" fill="#5aa4d6" fill-rule="evenodd"/></svg>
<svg style="left:152.5px;top:198.5px" width="25" height="25" viewBox="0 0 25 25"><path d="M12.5 0.8 C9 3 4.5 4.2 1 4.4 C1 13 4 20.5 12.5 24.2 C21 20.5 24 13 24 4.4 C20.5 4.2 16 3 12.5 0.8z" fill="none" stroke="#7c7c7c" stroke-width="1.5"/><rect x="7.6" y="10.2" width="9.8" height="8.2" fill="#4a9fd4"/><path d="M9.6 10.2 V6.4 H15.4 V10.2" fill="none" stroke="#4a9fd4" stroke-width="1.3"/><rect x="11.6" y="12.6" width="1.8" height="3.2" fill="#555"/></svg>
<svg style="left:152px;top:230px" width="26" height="27" viewBox="0 0 26 27"><text x="0.8" y="10.6" font-family="Liberation Sans,sans-serif" font-size="10.5" fill="#cfcfcf">a</text><path d="M9.6 4.2 L13.4 6.6 L9.6 9z" fill="#4a9fd4"/><text x="15" y="11" font-family="Liberation Sans,sans-serif" font-size="13.5" fill="#3cb4a2">A</text><text x="0.6" y="24.4" font-family="Liberation Sans,sans-serif" font-size="13" fill="#3cb4a2">B</text><path d="M13.6 16.4 L9.8 18.8 L13.6 21.2z" fill="#4a9fd4"/><text x="17.4" y="24.4" font-family="Liberation Sans,sans-serif" font-size="12" fill="#cfcfcf">b</text></svg>
<svg style="left:152px;top:262px" width="26" height="26" viewBox="0 0 26 26"><g fill="none" stroke="#3cc0ae" stroke-width="1.7"><path d="M1 4 H6.8 M1 12 H7 L9.6 4 H15 M9.4 12 H15"/></g><path d="M14.4 0.6 L18.6 4 L14.4 7.4z M14.4 8.6 L18.6 12 L14.4 15.4z" fill="#3cc0ae"/><text x="16" y="24.2" font-family="Liberation Sans,sans-serif" font-size="12.5" fill="#cfcfcf">#</text></svg>
<svg style="left:152.5px;top:295px" width="26" height="24" viewBox="0 0 26 24"><rect x="0.5" y="1.8" width="8" height="3" fill="#88c8b8"/><rect x="0.5" y="5.9" width="8" height="3" fill="#88c8b8"/><rect x="0.5" y="10" width="8" height="3" fill="#88c8b8"/><rect x="0.5" y="15.8" width="8" height="3" fill="#f0684a"/><rect x="0.5" y="19.8" width="8" height="3" fill="#f0684a"/><path d="M9.8 12.6h4" stroke="#4a9fd4" stroke-width="0.9"/><path d="M13.2 10.8 L15.6 12.6 L13.2 14.4z" fill="#4a9fd4"/><rect x="16.5" y="8" width="8" height="3" fill="#88c8b8"/><rect x="16.5" y="15.8" width="8" height="3" fill="#f0684a"/></svg>
<svg style="left:152.5px;top:327px" width="26" height="24" viewBox="0 0 26 24"><path d="M3.2 1 H5.8 V17 H9.2 L4.5 22.6 L-0.2 17 H3.2z" fill="#5aa4d6"/><path d="M10.8 1.4h12.8v3.2H10.8zM10.8 7.3h8.4v3.2h-8.4zM10.8 13.2h5.2v3.2h-5.2z" fill="#3cb4a2"/></svg>
<svg style="left:155px;top:359px" width="21" height="24" viewBox="0 0 21 24"><path d="M1.2 1.0 L18.9 1.0 L18.9 6.2 L17.8 6.2 L16.6 3.4 L5.6 3.4 L13.6 12.0 L5.4 20.4 L16.6 20.4 L17.8 17.4 L18.9 17.4 L18.9 22.9 L1.2 22.9 L1.2 21.8 L10.4 12.0 L1.2 2.2z" fill="#3cc0ae"/></svg>
<svg style="left:152px;top:390px" width="27" height="27" viewBox="0 0 27 27"><path d="M21.8 7.8 A10.6 10.6 0 1 0 14.2 23.2" fill="none" stroke="#3cc0ae" stroke-width="1.8"/><path d="M13 6.2 V14 H7" fill="none" stroke="#d0d0d0" stroke-width="1.9"/><path d="M17.6 11.0 L24.6 11.0 L21.2 16.4 L24.2 16.4 L16.8 24.8 L19.0 18.6 L15.8 18.6z" fill="#5aa8d8"/></svg>
<svg style="left:285px;top:5px" width="22" height="20" viewBox="0 0 22 20"><g fill="none" stroke="#e0a262" stroke-width="1.1"><rect x="2.6" y="2.6" width="4" height="4" rx="0.8"/><rect x="2.6" y="12.6" width="4" height="4" rx="0.8"/><rect x="13.5" y="7.6" width="4" height="4" rx="0.8"/></g><path d="M8.2 4.5 H9 Q9.6 4.5 9.6 5.2 V13.9 Q9.6 14.6 9 14.6 H8.2 M9.6 9.6 H12" fill="none" stroke="#a4abb8" stroke-width="1"/></svg>
<svg style="left:420px;top:6px" width="16" height="15" viewBox="0 0 16 15"><path d="M7.8 0.8 L14.8 8.6 L7.8 14z" fill="#e9ba74"/><path d="M7.8 0.8 L0.8 8.6 L7.8 14z" fill="#bf9558"/></svg>
<svg style="left:555.3px;top:5.3px" width="12" height="16" viewBox="0 0 12 16"><path d="M3 7 V4 Q3 1.2 6 1.2 Q9 1.2 9 4 V7" fill="none" stroke="#e8b06a" stroke-width="1.5"/><rect x="0.6" y="6.6" width="10.8" height="8.4" fill="#e8b06a"/><rect x="5.2" y="9.4" width="1.7" height="3" fill="#474747"/></svg>
<svg style="left:838px;top:5px" width="240" height="18" viewBox="0 0 240 18"><path d="M1.4 8H13" stroke="#e4e4e4" stroke-width="1.9"/><path d="M23 8H143" stroke="#2e2e2e" stroke-width="1.4"/><circle cx="55.6" cy="8.6" r="6.4" fill="#fff" stroke="#9a9a9a" stroke-width="1"/><path d="M147.6 8H159M153.3 2.3V13.7" stroke="#e4e4e4" stroke-width="1.9"/><path d="M166 8H180M172.4 2.2 L166.4 8 L172.4 13.8" fill="none" stroke="#e4e4e4" stroke-width="1.9"/><path d="M193.6 8H207.6M201.2 2.2 L207.2 8 L201.2 13.8" fill="none" stroke="#6e6e6e" stroke-width="1.9"/><path d="M221 0.2 H233.6 L237 3.6 V16.2 H221z" fill="#c8c8c8"/><path d="M225 0.2 h7.6 v5 h-7.6z" fill="#474747"/><path d="M226.8 0.2h2.2v3.8h-2.2z" fill="#c8c8c8"/></svg>
<svg style="left:1348.5px;top:7px" width="15" height="12" viewBox="0 0 15 12"><path d="M0.6 6 Q7.5 -3.4 14.4 6 Q7.5 15.4 0.6 6z" fill="none" stroke="#d8d8d8" stroke-width="1"/><circle cx="7.5" cy="6" r="2.9" fill="none" stroke="#d8d8d8" stroke-width="1"/></svg>
<svg style="left:1375px;top:7.5px" width="8" height="12" viewBox="0 0 8 12"><path d="M1.4 0.8 L6.4 5.6 L1.4 10.6" fill="none" stroke="#d8d8d8" stroke-width="1.1"/></svg>
<svg style="left:1019.5px;top:429px" width="15" height="12" viewBox="0 0 15 12"><path d="M0.6 6 Q7.5 -3.4 14.4 6 Q7.5 15.4 0.6 6z" fill="none" stroke="#d8d8d8" stroke-width="1"/><circle cx="7.5" cy="6" r="2.9" fill="none" stroke="#d8d8d8" stroke-width="1"/></svg>
<svg style="left:1043px;top:428px" width="13" height="14" viewBox="0 0 13 14"><path d="M7.2 0.6 L12 5.4 L10.4 6 L8.6 8 L8.2 10.8 L5.4 8.2 L1 12.8 L0.6 12.4 L4.8 7.6 L2.2 4.8 L5 4.4 L7 2.6z" fill="#d8d8d8"/></svg>
<svg style="left:1065px;top:433px" width="13" height="8" viewBox="0 0 13 8"><path d="M1 1 L6.5 6.2 L12 1" fill="none" stroke="#d8d8d8" stroke-width="1.1"/></svg>
<svg style="left:1128.5px;top:145px" width="17" height="17" viewBox="0 0 17 17"><g transform="scale(0.66)"><path d="M0.6 0 L5 3 L0.6 6z" fill="#4a9fd4"/><rect x="1" y="9.2" width="4.2" height="3.8" fill="#d2d2d2"/><rect x="1" y="14.7" width="4.2" height="9.3" fill="#8c8c8c"/><path d="M9 10.3h11M12 16.4h11M9 22.4h11" stroke="#9a9a9a" stroke-width="0.9"/><rect x="8" y="8.8" width="3" height="3" fill="#7cc4b6"/><rect x="18" y="8.8" width="3" height="3" fill="#7cc4b6"/><rect x="11" y="14.9" width="3" height="3" fill="#7cc4b6"/><rect x="21" y="14.9" width="3" height="3" fill="#7cc4b6"/><rect x="8" y="20.9" width="3" height="3" fill="#7cc4b6"/><rect x="18" y="20.9" width="3" height="3" fill="#7cc4b6"/></g></svg>
<svg style="left:1129px;top:543.5px" width="16" height="17" viewBox="0 0 16 17"><rect x="0.4" y="1.4" width="2.4" height="14.2" fill="#6a6a6a"/><rect x="4" y="3.6" width="3.2" height="12" fill="#3cb4a2"/><rect x="4" y="0.8" width="3.2" height="2.2" fill="#e8e8e8"/><rect x="8.6" y="1.4" width="2.4" height="14.2" fill="#6a6a6a"/><rect x="12.4" y="1.4" width="2.4" height="10" fill="#6a6a6a"/><path d="M10.8 13.4 L12.6 15.2 L15.4 11.8" fill="none" stroke="#6aa84a" stroke-width="1.1"/></svg>
<svg style="left:1129.5px;top:574.5px" width="16" height="16" viewBox="0 0 16 16"><path d="M4.6 0.8 L2.4 12.6 M9.2 0.8 L7 12.6 M1 4.6 H11.4 M0.4 8.8 H10.6" stroke="#f09a2a" stroke-width="1.3" fill="none"/><circle cx="11" cy="11.6" r="3.2" fill="#555" stroke="#c8c8c8" stroke-width="0.7"/><text x="11" y="13.4" font-size="5" font-family="Liberation Sans,sans-serif" fill="#d8d8d8" text-anchor="middle">@</text></svg>
<svg style="left:1128.5px;top:605.5px" width="17" height="17" viewBox="0 0 17 17"><circle cx="8.3" cy="8.3" r="7.4" fill="none" stroke="#4a9fd4" stroke-width="1" stroke-dasharray="19 4.2" stroke-dashoffset="-3"/><path d="M6.6 6.2 H8.9 V11.6 M6.4 11.8 H11" fill="none" stroke="#6ab4e0" stroke-width="1.2"/><rect x="7.6" y="3.4" width="1.5" height="1.5" fill="#6ab4e0"/></svg>
<div style="left:274px;top:448px;width:155px;height:156px;background:transparent;border:3px solid #e9463f;box-sizing:border-box;"></div>
<div style="left:964px;top:143px;width:40px;height:40px;background:#e84545;border-radius:50%;box-shadow:0 1.5px 2px rgba(0,0,0,0.35);"></div>
<span class="t " id="t107" style="left:965px;top:145.1px;font-size:31px;line-height:35px;color:#fff;width:40px;text-align:center;">1</span>
<div style="left:977px;top:169.4px;width:6.4px;height:5px;background:#e84545;"></div>
<div style="left:987.8px;top:169.4px;width:6px;height:5px;background:#e84545;"></div>
<div style="left:1228px;top:162.2px;width:40px;height:40px;background:#e84545;border-radius:50%;box-shadow:0 1.5px 2px rgba(0,0,0,0.35);"></div>
<span class="t " id="t108" style="left:1228px;top:164.3px;font-size:31px;line-height:35px;color:#fff;width:40px;text-align:center;">2</span>
<div style="left:930px;top:411.5px;width:40px;height:40px;background:#e84545;border-radius:50%;box-shadow:0 1.5px 2px rgba(0,0,0,0.35);"></div>
<span class="t " id="t109" style="left:930px;top:413.6px;font-size:31px;line-height:35px;color:#fff;width:40px;text-align:center;">3</span>
<svg style="left:0;top:0;pointer-events:none" width="1394" height="643" viewBox="0 0 1394 643"><defs><filter id="sh" x="-5%" y="-50%" width="110%" height="250%"><feGaussianBlur in="SourceAlpha" stdDeviation="1.6"/><feOffset dx="0.5" dy="3"/><feComponentTransfer><feFuncA type="linear" slope="0.45"/></feComponentTransfer><feMerge><feMergeNode/><feMergeNode in="SourceGraphic"/></feMerge></filter></defs><g filter="url(#sh)"><path d="M270 85.8 L787 160.2" stroke="#e84545" stroke-width="4.9" stroke-dasharray="15 5" fill="none"/><circle cx="270" cy="85.8" r="2.3" fill="#e84545"/><path d="M799.4 161.4 L786.3 152.2 L783.8 166.6z" fill="#e84545"/></g></svg>
<div style="left:0px;top:0px;width:1394px;height:1px;background:#000;"></div>
<div style="left:0px;top:0px;width:1px;height:643px;background:#000;"></div>
<div style="left:0px;top:642px;width:1394px;height:1px;background:#000;"></div>
<div style="left:0px;top:641px;width:1394px;height:1px;background:rgba(0,0,0,0.35);"></div>
<div style="left:1393px;top:0px;width:1px;height:643px;background:#000;"></div>
</body></html>
